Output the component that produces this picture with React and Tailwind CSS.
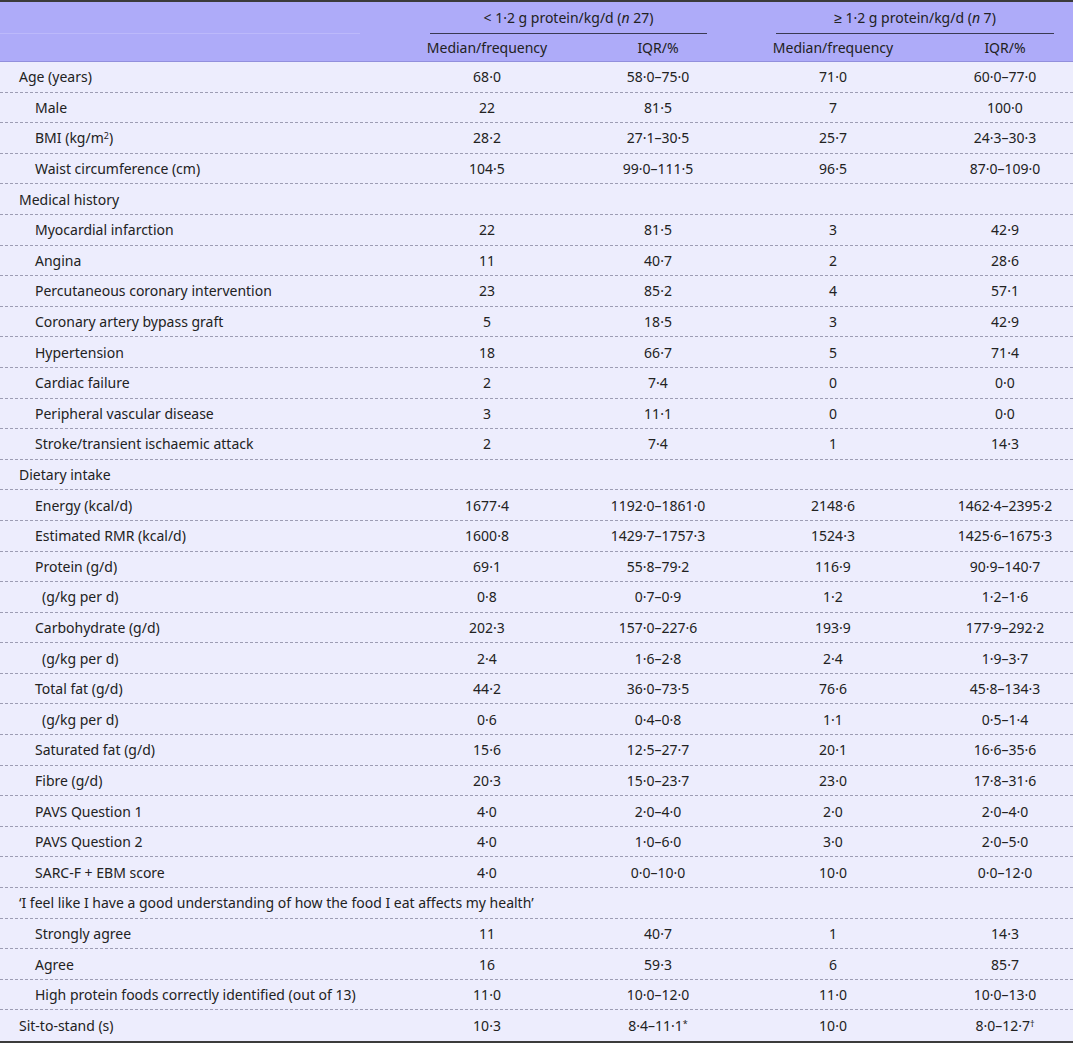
import React from "react";

const rows = [
  { label: "Age (years)", lvl: 0, v: ["68·0", "58·0–75·0", "71·0", "60·0–77·0"] },
  { label: "Male", lvl: 1, v: ["22", "81·5", "7", "100·0"] },
  { label: "BMI", sup: true, lvl: 1, v: ["28·2", "27·1–30·5", "25·7", "24·3–30·3"] },
  { label: "Waist circumference (cm)", lvl: 1, v: ["104·5", "99·0–111·5", "96·5", "87·0–109·0"] },
  { label: "Medical history", lvl: 0 },
  { label: "Myocardial infarction", lvl: 1, v: ["22", "81·5", "3", "42·9"] },
  { label: "Angina", lvl: 1, v: ["11", "40·7", "2", "28·6"] },
  { label: "Percutaneous coronary intervention", lvl: 1, v: ["23", "85·2", "4", "57·1"] },
  { label: "Coronary artery bypass graft", lvl: 1, v: ["5", "18·5", "3", "42·9"] },
  { label: "Hypertension", lvl: 1, v: ["18", "66·7", "5", "71·4"] },
  { label: "Cardiac failure", lvl: 1, v: ["2", "7·4", "0", "0·0"] },
  { label: "Peripheral vascular disease", lvl: 1, v: ["3", "11·1", "0", "0·0"] },
  { label: "Stroke/transient ischaemic attack", lvl: 1, v: ["2", "7·4", "1", "14·3"] },
  { label: "Dietary intake", lvl: 0 },
  { label: "Energy (kcal/d)", lvl: 1, v: ["1677·4", "1192·0–1861·0", "2148·6", "1462·4–2395·2"] },
  { label: "Estimated RMR (kcal/d)", lvl: 1, v: ["1600·8", "1429·7–1757·3", "1524·3", "1425·6–1675·3"] },
  { label: "Protein (g/d)", lvl: 1, v: ["69·1", "55·8–79·2", "116·9", "90·9–140·7"] },
  { label: "(g/kg per d)", lvl: 2, v: ["0·8", "0·7–0·9", "1·2", "1·2–1·6"] },
  { label: "Carbohydrate (g/d)", lvl: 1, v: ["202·3", "157·0–227·6", "193·9", "177·9–292·2"] },
  { label: "(g/kg per d)", lvl: 2, v: ["2·4", "1·6–2·8", "2·4", "1·9–3·7"] },
  { label: "Total fat (g/d)", lvl: 1, v: ["44·2", "36·0–73·5", "76·6", "45·8–134·3"] },
  { label: "(g/kg per d)", lvl: 2, v: ["0·6", "0·4–0·8", "1·1", "0·5–1·4"] },
  { label: "Saturated fat (g/d)", lvl: 1, v: ["15·6", "12·5–27·7", "20·1", "16·6–35·6"] },
  { label: "Fibre (g/d)", lvl: 1, v: ["20·3", "15·0–23·7", "23·0", "17·8–31·6"] },
  { label: "PAVS Question 1", lvl: 1, v: ["4·0", "2·0–4·0", "2·0", "2·0–4·0"] },
  { label: "PAVS Question 2", lvl: 1, v: ["4·0", "1·0–6·0", "3·0", "2·0–5·0"] },
  { label: "SARC-F + EBM score", lvl: 1, v: ["4·0", "0·0–10·0", "10·0", "0·0–12·0"] },
  { label: "‘I feel like I have a good understanding of how the food I eat affects my health’", lvl: 0, wide: true },
  { label: "Strongly agree", lvl: 1, v: ["11", "40·7", "1", "14·3"] },
  { label: "Agree", lvl: 1, v: ["16", "59·3", "6", "85·7"] },
  { label: "High protein foods correctly identified (out of 13)", lvl: 1, v: ["11·0", "10·0–12·0", "11·0", "10·0–13·0"] },
  { label: "Sit-to-stand (s)", lvl: 0, v: ["10·3", "8·4–11·1", "10·0", "8·0–12·7"], marks: ["*", "†"] },
];

const pad = ["pl-[19px]", "pl-[35px]", "pl-[42px]"];
const grid = "grid grid-cols-[403px_168px_174px_176px_152px]";

function Row({ r, last }) {
  return (
    <div
      className={`${grid} h-[30.6px] items-center ${last ? "" : "border-b border-dashed border-[#9d9db4]"}`}
    >
      <div className={`${pad[r.lvl]} whitespace-nowrap ${r.wide ? "col-span-5" : ""}`}>
        {r.label}
        {r.sup && (
          <>
            {" (kg/m"}
            <sup className="text-[9px]">2</sup>
            {")"}
          </>
        )}
      </div>
      {r.v &&
        r.v.map((x, i) => (
          <div key={i} className={`text-center ${i === 3 ? "pl-4" : ""}`}>
            {x}
            {r.marks && i === 1 && <sup className="text-[9px]">{r.marks[0]}</sup>}
            {r.marks && i === 3 && <sup className="text-[9px]">{r.marks[1]}</sup>}
          </div>
        ))}
    </div>
  );
}

export default function App() {
  return (
    <div className="w-[1073px] h-[1045px] bg-white font-['Noto_Sans',sans-serif] text-[14px] text-[#222]">
      <div className="border-t-2 border-b-2 border-[#3b3b3b]">
        {/* Header */}
        <div className="bg-[#aeabf9] border-b border-[#928fdc]">
          <div className={`${grid} h-[32px]`}>
            <div className="flex flex-col justify-end">
              <div className="h-px w-[360px] bg-[#bcb9fb]" />
            </div>
            <div className="col-span-2 flex flex-col ml-[27px] mr-[38px]">
              <div className="flex-1 flex items-center justify-center">
                &lt; 1·2 g protein/kg/d (<i>n</i>&nbsp;27)
              </div>
              <div className="h-[1.5px] bg-[#3a3a52]" />
            </div>
            <div className="col-span-2 flex flex-col ml-[31px] mr-[19px]">
              <div className="flex-1 flex items-center justify-center">
                ≥ 1·2 g protein/kg/d (<i>n</i>&nbsp;7)
              </div>
              <div className="h-[1.5px] bg-[#3a3a52]" />
            </div>
          </div>
          <div className={`${grid} h-[27px] items-center`}>
            <div />
            <div className="text-center">Median/frequency</div>
            <div className="text-center">IQR/%</div>
            <div className="text-center">Median/frequency</div>
            <div className="text-center pl-4">IQR/%</div>
          </div>
        </div>
        {/* Body */}
        <div className="bg-[#ededfd]">
          {rows.map((r, i) => (
            <Row key={i} r={r} last={i === rows.length - 1} />
          ))}
        </div>
      </div>
    </div>
  );
}
